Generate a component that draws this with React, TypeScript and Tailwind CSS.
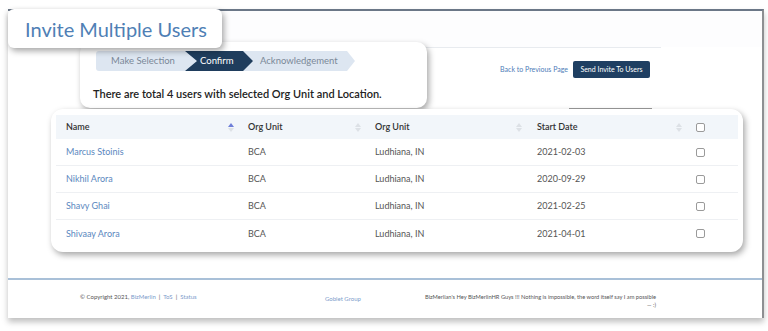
import React from "react"

const rows = [
  { name: "Marcus Stoinis", unit: "BCA", loc: "Ludhiana, IN", date: "2021-02-03" },
  { name: "Nikhil Arora", unit: "BCA", loc: "Ludhiana, IN", date: "2020-09-29" },
  { name: "Shavy Ghai", unit: "BCA", loc: "Ludhiana, IN", date: "2021-02-25" },
  { name: "Shivaay Arora", unit: "BCA", loc: "Ludhiana, IN", date: "2021-04-01" },
]

function SortIcon({ active }: { active?: boolean }) {
  return (
    <span className="flex flex-col items-center gap-[1px]">
      <span
        className={`w-0 h-0 border-l-[3px] border-r-[3px] border-b-[4px] border-l-transparent border-r-transparent ${
          active ? "border-b-[#6f7fd8]" : "border-b-[#dde1e6]"
        }`}
      />
      <span className="w-0 h-0 border-l-[3px] border-r-[3px] border-t-[4px] border-l-transparent border-r-transparent border-t-[#dde1e6]" />
    </span>
  )
}

function Box() {
  return <span className="block w-[9px] h-[9px] border border-[#9a9a9a] rounded-[2px] bg-white" />
}

export default function App() {
  return (
    <div className="relative w-[768px] h-[331px] bg-white overflow-hidden font-['Lato','Open_Sans',sans-serif]">
      {/* Base page */}
      <div className="ml-[8px] mt-[9px] w-[756px] h-[309px] bg-white border-t-[2px] border-t-[#6b7787] border-r-[2px] border-r-[#8d8f92] shadow-[0_4px_6px_rgba(0,0,0,0.25)] flex flex-col">
        <div className="h-[36px] bg-[#fdfdfe]" />
        <div className="ml-[72px] w-[581px] h-px bg-[#e8ebef]" />
        <div className="flex items-center justify-end w-[642px] pt-[13px] gap-[5px]">
          <span className="text-[7px] text-[#4e7cb8]">Back to Previous Page</span>
          <span className="h-[17px] w-[77px] flex items-center justify-center rounded-[2px] bg-[#1f3f62] text-white text-[7px]">
            Send Invite To Users
          </span>
        </div>
        <div className="ml-[561px] mt-[30px] w-[83px] h-px bg-[#9a9a9a]" />
        <div className="flex-1" />
        <div className="h-[2px] bg-[#a9c0d8]" />
        <div className="h-[38px] flex items-start pt-[12px] text-[6px] text-[#555]">
          <span className="ml-[72px] w-[245px]">
            © Copyright 2021, <span className="text-[#7d9ccb]">BizMerlin</span> &nbsp;|&nbsp;{" "}
            <span className="text-[#7d9ccb]">ToS</span> &nbsp;|&nbsp; <span className="text-[#7d9ccb]">Status</span>
          </span>
          <span className="w-[95px] mt-[2px] text-[#7d9ccb]">Goblet Group</span>
          <span className="w-[236px] mt-[1px] flex flex-col items-end text-[5.7px] leading-[8px]">
            <span>BizMerlian's Hey BizMerlinHR Guys !!! Nothing is impossible, the word itself say I am possible</span>
            <span>— :)</span>
          </span>
        </div>
      </div>

      {/* Stepper callout */}
      <div className="absolute left-[80px] top-[42px] w-[347px] h-[66px] bg-white rounded-[10px] shadow-[2px_3px_6px_rgba(0,0,0,0.35)] pl-[16px] pt-[9px]">
        <div className="flex h-[20px] w-[259px] bg-[#dde6f1] rounded-l-[3px] text-[9.5px] [clip-path:polygon(0_0,calc(100%-8px)_0,100%_50%,calc(100%-8px)_100%,0_100%)]">
          <span className="w-[89px] flex items-center justify-center pl-[5px] text-[#7b8898]">Make Selection</span>
          <span className="w-[68px] flex items-center pl-[15px] bg-[#1f3d5d] text-white [clip-path:polygon(0_0,calc(100%-10px)_0,100%_50%,calc(100%-10px)_100%,0_100%,12px_50%)]">
            Confirm
          </span>
          <span className="flex-1 flex items-center pl-[7px] text-[#7b8898]">Acknowledgement</span>
        </div>
        <div className="mt-[15px] -ml-[3px] text-[11px] font-semibold text-[#222]">
          There are total 4 users with selected Org Unit and Location.
        </div>
      </div>

      {/* Title callout */}
      <div className="absolute left-[8px] top-[9px] w-[214px] h-[39px] bg-white rounded-[6px] shadow-[2px_3px_6px_rgba(0,0,0,0.35)] pl-[17px] flex items-center">
        <span className="text-[20px] text-[#4f7fb5] leading-none">Invite Multiple Users</span>
      </div>

      {/* Table callout */}
      <div className="absolute left-[51px] top-[109px] w-[692px] h-[143px] bg-white rounded-[12px] shadow-[2px_3px_6px_rgba(0,0,0,0.35)] px-[5px] pt-[6px]">
        <div className="grid grid-cols-[182px_127px_162px_159px_52px] h-[24px] bg-[#f2f6fa] text-[9px] font-semibold text-[#333] items-center">
          <div className="flex items-center justify-between pl-[10px] pr-[4px]">
            <span>Name</span>
            <SortIcon active />
          </div>
          <div className="flex items-center justify-between pl-[10px] pr-[4px]">
            <span>Org Unit</span>
            <SortIcon />
          </div>
          <div className="flex items-center justify-between pl-[10px] pr-[5px]">
            <span>Org Unit</span>
            <SortIcon />
          </div>
          <div className="flex items-center justify-between pl-[10px] pr-[4px]">
            <span>Start Date</span>
            <SortIcon />
          </div>
          <div className="pl-[10px]">
            <Box />
          </div>
        </div>
        {rows.map((r, i) => (
          <div
            key={r.name}
            className={`grid grid-cols-[182px_127px_162px_159px_52px] h-[27px] items-center text-[9px] text-[#555] ${
              i < rows.length - 1 ? "border-b border-[#eef0f3]" : ""
            }`}
          >
            <span className="pl-[10px] text-[#5b88c0]">{r.name}</span>
            <span className="pl-[10px]">{r.unit}</span>
            <span className="pl-[10px]">{r.loc}</span>
            <span className="pl-[10px]">{r.date}</span>
            <span className="pl-[10px]">
              <Box />
            </span>
          </div>
        ))}
      </div>
    </div>
  )
}
